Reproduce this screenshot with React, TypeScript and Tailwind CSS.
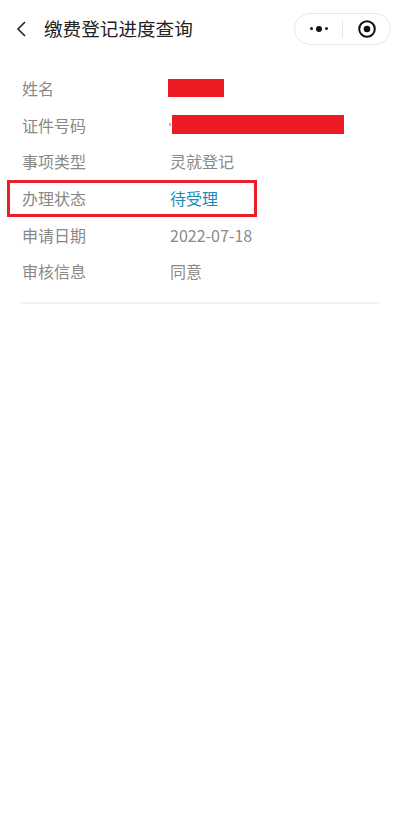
export default function App() {
  const rows = [
    { label: '姓名', value: null, redact: 'w-[56px] h-[18px]' },
    { label: '证件号码', value: null, redact: 'w-[172px] h-[19px]' },
    { label: '事项类型', value: '灵就登记' },
    { label: '办理状态', value: '待受理', highlight: true },
    { label: '申请日期', value: '2022-07-18' },
    { label: '审核信息', value: '同意' },
  ];

  return (
    <div
      className="w-[400px] h-[840px] bg-white text-[#333]"
      style={{ fontFamily: '"Noto Sans CJK SC", "Noto Sans", sans-serif' }}
    >
      {/* Header */}
      <div className="flex items-center h-[57px] pl-[14px] pr-[9px]">
        <svg width="16" height="18" viewBox="0 0 16 18" className="mr-[14px]">
          <path d="M11 2 L4 9 L11 16" fill="none" stroke="#222" strokeWidth="1.6" />
        </svg>
        <div className="flex-1 text-[18.6px] text-[#222] leading-none">缴费登记进度查询</div>
        <div className="flex items-center w-[97px] h-[32px] rounded-full border border-[#e8e8e8] bg-white/90">
          <div className="flex-1 flex items-center justify-center gap-[3px]">
            <span className="w-[3px] h-[3px] rounded-full bg-[#111]" />
            <span className="w-[6px] h-[6px] rounded-full bg-[#111]" />
            <span className="w-[3px] h-[3px] rounded-full bg-[#111]" />
          </div>
          <div className="w-px h-[18px] bg-[#e5e5e5]" />
          <div className="flex-1 flex items-center justify-center">
            <svg width="20" height="20" viewBox="0 0 20 20">
              <circle cx="10" cy="10" r="7.8" fill="none" stroke="#111" strokeWidth="2" />
              <circle cx="10" cy="10" r="3.3" fill="#111" />
            </svg>
          </div>
        </div>
      </div>

      {/* Details */}
      <div className="px-[20px] pt-[13px]">
        <div className="flex flex-col">
          {rows.map((r, i) => (
            <div
              key={i}
              className={
                r.highlight
                  ? 'flex items-center h-[37px] -mx-[13px] px-[13px] w-[250px] border-[3px] border-[#e8202a] box-border'
                  : 'flex items-center h-[36.5px]'
              }
            >
              <div
                className={
                  r.highlight
                    ? 'w-[148px] -ml-[1px] text-[16px] text-[#888]'
                    : 'w-[148px] ml-[2px] text-[16px] text-[#888]'
                }
              >
                {r.label}
              </div>
              {r.value ? (
                <div className={r.highlight ? 'text-[16px] text-[#1a8ab8]' : 'text-[16px] text-[#8a8a8a]'}>
                  {r.value}
                </div>
              ) : (
                <div className="flex items-center -ml-[2px]">
                  {i === 1 && <span className="w-[2px] h-[3px] bg-[#bbb] mr-[1px] ml-[1px]" />}
                  <div className={`${r.redact} bg-[#ed1c24]`} />
                </div>
              )}
            </div>
          ))}
        </div>
        <div className="mt-[12px] h-[2px] bg-[#f2f2f2]" />
      </div>
    </div>
  );
}
